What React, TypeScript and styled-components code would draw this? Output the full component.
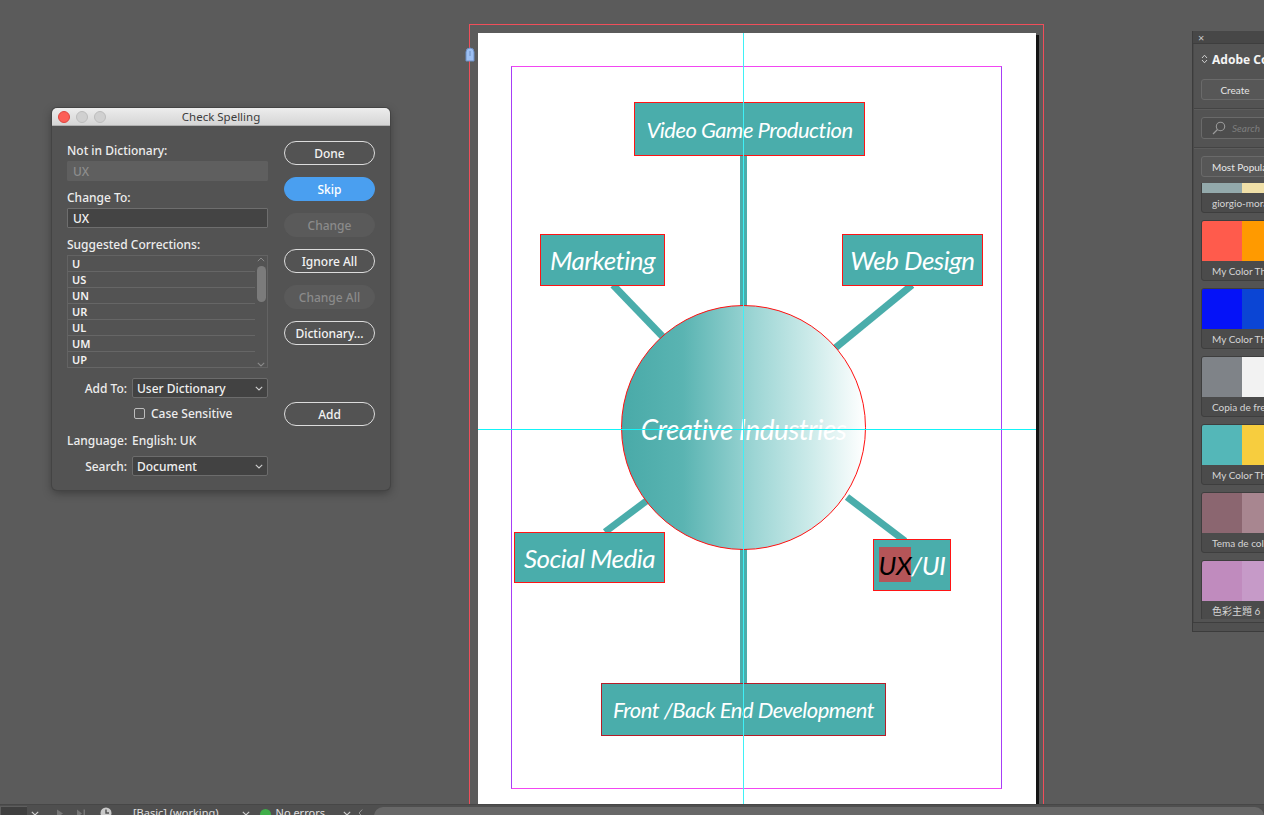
import React from "react";
import styled, { createGlobalStyle } from "styled-components";

const Global = createGlobalStyle`
  html, body { margin: 0; padding: 0; background: #5b5b5b; overflow: hidden; }
  #root { height: 100vh; }
  * { box-sizing: border-box; }
`;

const UI = `"Noto Sans", "Open Sans", sans-serif`;
const DIAGRAM = `Lato, "Open Sans", sans-serif`;

const Workspace = styled.div`
  width: 100vw;
  height: 100vh;
  display: flex;
  flex-direction: column;
  overflow: hidden;
  font-family: ${UI};
`;

const Canvas = styled.div`
  position: relative;
  flex: 0 0 804px;
  overflow: hidden;
  background: #5b5b5b;
`;

/* ---------- document spread ---------- */
const Bleed = styled.div`
  position: absolute;
  left: 469px;
  top: 24px;
  width: 575px;
  height: 800px;
  border: 1px solid #f04e5a;
  border-bottom: none;
  padding: 8px 7px 0 8px;
  display: flex;
`;

const Page = styled.div`
  position: relative;
  width: 558px;
  height: 790px;
  background: #ffffff;
  box-shadow: 3px 2px 0 0 #141414;
`;

const MarginGuide = styled.div`
  position: absolute;
  left: 33px;
  top: 33px;
  width: 491px;
  height: 723px;
  border-top: 1px solid #f246f2;
  border-bottom: 1px solid #f246f2;
  border-left: 1px solid #a63ef6;
  border-right: 1px solid #a63ef6;
`;

const Connectors = styled.svg`
  position: absolute;
  left: 0;
  top: 0;
  width: 558px;
  height: 790px;
`;

const Hub = styled.div`
  position: absolute;
  left: 143px;
  top: 272px;
  width: 245px;
  height: 245px;
  border-radius: 50%;
  border: 1px solid #ff1010;
  background: linear-gradient(90deg, #49aaa8 0%, #5ab4b2 25%, #9ed6d5 55%, #cdebea 78%, #ffffff 100%);
  display: flex;
  align-items: center;
  justify-content: center;
`;

const HubLabel = styled.span`
  font-family: ${DIAGRAM};
  font-style: italic;
  font-size: 28px;
  letter-spacing: -0.6px;
  color: #ffffff;
  white-space: nowrap;
  margin-top: 2px;
`;

const NodeBox = styled.div<{ $dark?: boolean }>`
  position: absolute;
  background: #4aadab;
  border: 1px solid ${(p) => (p.$dark ? "#b51c28" : "#ff1414")};
  display: flex;
  align-items: center;
  justify-content: center;
  font-family: ${DIAGRAM};
  font-style: italic;
  color: #ffffff;
  white-space: nowrap;
`;

const NodeText = styled.span<{ $size: number }>`
  font-size: ${(p) => p.$size}px;
  letter-spacing: -0.5px;
`;

const Highlight = styled.span`
  background: #b55558;
  color: #000000;
  padding: 2px 0 1px 0;
`;

const VGuide = styled.div`
  position: absolute;
  left: 265px;
  top: 0;
  width: 1px;
  height: 790px;
  background: #3ff0f6;
`;

const HGuide = styled.div`
  position: absolute;
  left: 0;
  top: 396px;
  width: 558px;
  height: 1px;
  background: #12f4f8;
`;

const LockIcon = styled.svg`
  position: absolute;
  left: 465px;
  top: 47px;
`;

/* ---------- check spelling dialog ---------- */
const Dialog = styled.div`
  position: absolute;
  left: 52px;
  top: 108px;
  width: 338px;
  border-radius: 5px;
  background: #535353;
  box-shadow: 0 0 0 1px #444, 0 3px 10px rgba(0, 0, 0, 0.35);
  overflow: hidden;
`;

const TitleBar = styled.div`
  position: relative;
  height: 18px;
  background: linear-gradient(#ededed, #d5d5d5);
  border-bottom: 1px solid #b0b0b0;
  display: flex;
  align-items: center;
  justify-content: center;
`;

const Lights = styled.div`
  position: absolute;
  left: 6px;
  top: 3px;
  display: flex;
  gap: 6px;
`;

const Light = styled.span<{ $red?: boolean }>`
  width: 12px;
  height: 12px;
  border-radius: 50%;
  background: ${(p) => (p.$red ? "#fc5f57" : "#d0d0d0")};
  border: 1px solid ${(p) => (p.$red ? "#dd453f" : "#bcbcbc")};
`;

const TitleText = styled.span`
  font-size: 11.5px;
  color: #3c3c3c;
  font-family: ${UI};
`;

const DialogBody = styled.div`
  display: flex;
  gap: 16px;
  padding: 15px 15px 14px 15px;
`;

const LeftCol = styled.div`
  width: 201px;
  display: flex;
  flex-direction: column;
`;

const FieldLabel = styled.div<{ $gap?: number }>`
  height: 16px;
  line-height: 16px;
  margin-top: ${(p) => p.$gap ?? 0}px;
  font-size: 12px;
  font-weight: 500;
  color: #ededed;
  white-space: nowrap;
`;

const TextField = styled.div<{ $readOnly?: boolean }>`
  margin-top: 2px;
  height: 20px;
  line-height: 19px;
  padding: 0 5px;
  font-size: 12px;
  font-weight: 500;
  border-radius: 1px;
  background: ${(p) => (p.$readOnly ? "#5f5f5f" : "#444444")};
  border: 1px solid ${(p) => (p.$readOnly ? "#5f5f5f" : "#6e6e6e")};
  color: ${(p) => (p.$readOnly ? "#8d8d8d" : "#f2f2f2")};
`;

const ListBox = styled.div`
  position: relative;
  margin-top: 2px;
  height: 113px;
  border: 1px solid #636363;
  display: flex;
`;

const ListRows = styled.div`
  flex: 1;
`;

const ListRow = styled.div`
  height: 16px;
  line-height: 15px;
  padding-left: 4px;
  font-size: 11px;
  font-weight: 600;
  color: #f2f2f2;
  border-bottom: 1px solid #666666;
`;

const ScrollTrack = styled.div`
  width: 12px;
  display: flex;
  flex-direction: column;
  align-items: center;
  padding-top: 1px;
`;

const ScrollThumb = styled.div`
  width: 9px;
  height: 36px;
  margin-top: 4px;
  border-radius: 5px;
  background: #7b7b7b;
`;

const ScrollSpacer = styled.div`
  flex: 1;
`;

const FormGrid = styled.div`
  margin-top: 10px;
  display: grid;
  grid-template-columns: 60px 136px;
  column-gap: 5px;
  align-items: center;
`;

const RowLabel = styled.div`
  text-align: right;
  font-size: 12px;
  font-weight: 500;
  color: #ededed;
  white-space: nowrap;
`;

const RowValue = styled.div`
  font-size: 12px;
  font-weight: 500;
  color: #ededed;
  white-space: nowrap;
`;

const Select = styled.div`
  height: 20px;
  padding: 0 4px;
  border: 1px solid #6c6c6c;
  border-radius: 2px;
  background: #424242;
  display: flex;
  align-items: center;
  justify-content: space-between;
  font-size: 12px;
  font-weight: 500;
  color: #f0f0f0;
`;

const GridCell = styled.div<{ $col?: number; $mt?: number }>`
  grid-column: ${(p) => p.$col ?? "auto"};
  margin-top: ${(p) => p.$mt ?? 0}px;
`;

const CheckRow = styled.label`
  display: flex;
  align-items: center;
  gap: 6px;
  height: 16px;
  padding-left: 2px;
  font-size: 12px;
  font-weight: 500;
  color: #ededed;
`;

const CheckBox = styled.span`
  width: 11px;
  height: 11px;
  border: 1px solid #bdbdbd;
  border-radius: 2px;
`;

const RightCol = styled.div`
  width: 91px;
  display: flex;
  flex-direction: column;
  gap: 12px;
`;

const SpellButton = styled.div<{ $variant: "outline" | "primary" | "disabled"; $mt?: number }>`
  height: 24px;
  border-radius: 12px;
  margin-top: ${(p) => p.$mt ?? 0}px;
  display: flex;
  align-items: center;
  justify-content: center;
  font-size: 12px;
  font-weight: 500;
  ${(p) =>
    p.$variant === "primary"
      ? "background:#4a9ff0;border:1px solid #4a9ff0;color:#ffffff;"
      : p.$variant === "disabled"
      ? "background:#5a5a5a;border:1px solid #5a5a5a;color:#8b8b8b;"
      : "background:transparent;border:1px solid #dcdcdc;color:#f2f2f2;"}
`;

/* ---------- adobe color themes panel ---------- */
const ThemePanel = styled.div`
  position: absolute;
  left: 1192px;
  top: 31px;
  width: 240px;
  height: 601px;
  background: #535353;
  border-left: 1px solid #3c3c3c;
  border-bottom: 1px solid #3c3c3c;
  display: flex;
  flex-direction: column;
`;

const PanelTab = styled.div`
  height: 13px;
  background: #474747;
  border-bottom: 1px solid #3e3e3e;
  display: flex;
  align-items: center;
  padding-left: 5px;
  color: #c8c8c8;
  font-size: 11px;
  line-height: 1;
`;

const PanelBody = styled.div`
  flex: 1;
  display: flex;
  flex-direction: column;
  padding-left: 7px;
  border-left: 1px solid #4a4a4a;
`;

const PanelTitle = styled.div`
  height: 30px;
  display: flex;
  align-items: center;
  gap: 4px;
  margin-left: 0;
  font-size: 12px;
  font-weight: 700;
  color: #f4f4f4;
  white-space: nowrap;
`;

const PanelButton = styled.div<{ $width: number; $mt: number; $left?: boolean }>`
  width: ${(p) => p.$width}px;
  height: 21px;
  margin-top: ${(p) => p.$mt}px;
  border: 1px solid #6a6a6a;
  border-radius: 3px;
  background: #575757;
  display: flex;
  align-items: center;
  justify-content: ${(p) => (p.$left ? "flex-start" : "center")};
  padding-left: ${(p) => (p.$left ? 10 : 0)}px;
  font-family: Lato, "Open Sans", sans-serif;
  font-size: 10px;
  color: #e6e6e6;
  white-space: nowrap;
`;

const Divider = styled.div<{ $mt: number }>`
  height: 1px;
  margin-top: ${(p) => p.$mt}px;
  margin-left: -7px;
  background: #444444;
  box-shadow: 0 1px 0 #5c5c5c;
`;

const SearchBox = styled.div`
  width: 200px;
  height: 22px;
  margin-top: 8px;
  border: 1px solid #6a6a6a;
  border-radius: 3px;
  background: #4d4d4d;
  display: flex;
  align-items: center;
  gap: 6px;
  padding-left: 10px;
  font-family: Lato, "Open Sans", sans-serif;
  font-size: 10px;
  font-style: italic;
  color: #7e7e7e;
`;

const ThemeViewport = styled.div`
  margin-top: 6px;
  height: 436px;
  overflow: hidden;
`;

const ThemeList = styled.div`
  display: flex;
  flex-direction: column;
  gap: 7px;
  margin-top: -31px;
`;

const ThemeCard = styled.div`
  width: 200px;
  height: 61px;
  border: 1px solid #3e3e3e;
  border-radius: 3px;
  overflow: hidden;
  display: flex;
  flex-direction: column;
  background: #4b4b4b;
`;

const Swatches = styled.div`
  height: 40px;
  display: flex;
`;

const Swatch = styled.div<{ $c: string }>`
  width: 40px;
  background: ${(p) => p.$c};
`;

const CardLabel = styled.div`
  flex: 1;
  display: flex;
  align-items: center;
  padding-left: 10px;
  font-size: 10px;
  color: #d6d6d6;
  white-space: nowrap;
  font-family: Lato, "Noto Sans CJK TC", sans-serif;
`;

const PanelFooter = styled.div`
  height: 9px;
  border-top: 1px solid #3e3e3e;
  background: #505050;
`;

/* ---------- status bar ---------- */
const StatusBar = styled.div`
  flex: 0 0 22px;
  background: #4f4f4f;
  border-top: 1px solid #474747;
  display: flex;
  align-items: flex-start;
  font-size: 11px;
  color: #e0e0e0;
  white-space: nowrap;
`;

const PageField = styled.div`
  width: 27px;
  height: 18px;
  margin-top: 1px;
  background: #3f3f3f;
  border: 1px solid #5e5e5e;
  border-right: none;
`;

const ChevBox = styled.div<{ $ml?: number }>`
  width: 15px;
  height: 16px;
  margin-left: ${(p) => p.$ml ?? 0}px;
  display: flex;
  align-items: center;
  justify-content: center;
`;

const BarField = styled.div<{ $ml: number }>`
  margin-left: ${(p) => p.$ml}px;
  height: 16px;
  line-height: 16px;
  display: flex;
  align-items: center;
`;

const StatusDot = styled.span`
  width: 11px;
  height: 11px;
  border-radius: 50%;
  background: #3fae49;
  margin-top: 3px;
`;

const ScrollField = styled.div`
  margin-left: 11px;
  margin-top: 2px;
  flex: 1;
  height: 18px;
  border-radius: 9px;
  background: #686868;
`;

const Chevron = ({ color = "#cfcfcf" }: { color?: string }) => (
  <svg width="8" height="5" viewBox="0 0 8 5">
    <path d="M0.8 0.8 L4 4 L7.2 0.8" fill="none" stroke={color} strokeWidth="1.1" />
  </svg>
);

const connectors: [number, number, number, number][] = [
  [265.5, 122, 265.5, 273],
  [265.5, 516, 265.5, 651],
  [135, 252, 186, 305],
  [434, 252, 356, 316],
  [127, 499, 171, 466],
  [369, 464, 427, 508],
];

const suggestions = ["U", "US", "UN", "UR", "UL", "UM", "UP"];

const themes: { a: string; b: string; name: string }[] = [
  { a: "#93a9ab", b: "#f0e0a8", name: "giorgio-morandi" },
  { a: "#ff5b4c", b: "#ff9a00", name: "My Color Theme" },
  { a: "#0512f8", b: "#0b45d4", name: "My Color Theme" },
  { a: "#7f8388", b: "#f2f2f2", name: "Copia de frenchtoast" },
  { a: "#54b7b8", b: "#f7cd3e", name: "My Color Theme" },
  { a: "#8b6670", b: "#a88690", name: "Tema de color 1" },
  { a: "#c08bbe", b: "#c69ac8", name: "色彩主題 6" },
];

export default function App() {
  return (
    <>
      <Global />
      <Workspace>
        <Canvas>
          <Bleed>
            <Page>
              <MarginGuide />
              <Connectors viewBox="0 0 558 790">
                {connectors.map(([x1, y1, x2, y2], i) => (
                  <line key={i} x1={x1} y1={y1} x2={x2} y2={y2} stroke="#4aadab" strokeWidth="7" />
                ))}
              </Connectors>
              <Hub>
                <HubLabel>Creative Industries</HubLabel>
              </Hub>
              <NodeBox style={{ left: 156, top: 69, width: 231, height: 54 }}>
                <NodeText $size={22}>Video Game Production</NodeText>
              </NodeBox>
              <NodeBox style={{ left: 62, top: 201, width: 125, height: 52 }}>
                <NodeText $size={26}>Marketing</NodeText>
              </NodeBox>
              <NodeBox style={{ left: 364, top: 201, width: 141, height: 52 }}>
                <NodeText $size={26}>Web Design</NodeText>
              </NodeBox>
              <NodeBox style={{ left: 36, top: 499, width: 151, height: 51 }}>
                <NodeText $size={26}>Social Media</NodeText>
              </NodeBox>
              <NodeBox style={{ left: 395, top: 506, width: 78, height: 52 }}>
                <NodeText $size={26}>
                  <Highlight>UX</Highlight>/UI
                </NodeText>
              </NodeBox>
              <NodeBox $dark style={{ left: 123, top: 650, width: 285, height: 53 }}>
                <NodeText $size={22}>Front /Back End Development</NodeText>
              </NodeBox>
              <VGuide />
              <HGuide />
            </Page>
          </Bleed>
          <LockIcon width="10" height="15" viewBox="0 0 10 15">
            <path d="M1 14 V5 A4 4 0 0 1 9 5 V14 Z" fill="#9dc0f3" stroke="#6d8fc4" strokeWidth="1" />
            <line x1="5" y1="4" x2="5" y2="9" stroke="#6d8fc4" strokeWidth="1" />
          </LockIcon>

          <Dialog>
            <TitleBar>
              <Lights>
                <Light $red />
                <Light />
                <Light />
              </Lights>
              <TitleText>Check Spelling</TitleText>
            </TitleBar>
            <DialogBody>
              <LeftCol>
                <FieldLabel $gap={2}>Not in Dictionary:</FieldLabel>
                <TextField $readOnly>UX</TextField>
                <FieldLabel $gap={9}>Change To:</FieldLabel>
                <TextField>UX</TextField>
                <FieldLabel $gap={9}>Suggested Corrections:</FieldLabel>
                <ListBox>
                  <ListRows>
                    {suggestions.map((s) => (
                      <ListRow key={s}>{s}</ListRow>
                    ))}
                  </ListRows>
                  <ScrollTrack>
                    <svg width="8" height="5" viewBox="0 0 8 5">
                      <path d="M0.8 4.2 L4 1 L7.2 4.2" fill="none" stroke="#8a8a8a" strokeWidth="1" />
                    </svg>
                    <ScrollThumb />
                    <ScrollSpacer />
                    <Chevron color="#8a8a8a" />
                  </ScrollTrack>
                </ListBox>
                <FormGrid>
                  <RowLabel>Add To:</RowLabel>
                  <Select>
                    <span>User Dictionary</span>
                    <Chevron />
                  </Select>
                  <GridCell $col={2} $mt={7}>
                    <CheckRow>
                      <CheckBox />
                      Case Sensitive
                    </CheckRow>
                  </GridCell>
                  <GridCell $mt={11}>
                    <RowLabel>Language:</RowLabel>
                  </GridCell>
                  <GridCell $mt={11}>
                    <RowValue>English: UK</RowValue>
                  </GridCell>
                  <GridCell $mt={7}>
                    <RowLabel>Search:</RowLabel>
                  </GridCell>
                  <GridCell $mt={7}>
                    <Select>
                      <span>Document</span>
                      <Chevron />
                    </Select>
                  </GridCell>
                </FormGrid>
              </LeftCol>
              <RightCol>
                <SpellButton $variant="outline">Done</SpellButton>
                <SpellButton $variant="primary">Skip</SpellButton>
                <SpellButton $variant="disabled">Change</SpellButton>
                <SpellButton $variant="outline">Ignore All</SpellButton>
                <SpellButton $variant="disabled">Change All</SpellButton>
                <SpellButton $variant="outline">Dictionary...</SpellButton>
                <SpellButton $variant="outline" $mt={45}>
                  Add
                </SpellButton>
              </RightCol>
            </DialogBody>
          </Dialog>

          <ThemePanel>
            <PanelTab>×</PanelTab>
            <PanelBody>
              <PanelTitle>
                <svg width="7" height="10" viewBox="0 0 7 10">
                  <path d="M1 4 L3.5 1.2 L6 4 M1 6 L3.5 8.8 L6 6" fill="none" stroke="#d0d0d0" strokeWidth="1" />
                </svg>
                Adobe Color Themes
              </PanelTitle>
              <PanelButton $width={68} $mt={5}>
                Create
              </PanelButton>
              <Divider $mt={8} />
              <SearchBox>
                <svg width="14" height="14" viewBox="0 0 14 14">
                  <circle cx="8.5" cy="5.5" r="4.2" fill="none" stroke="#9a9a9a" strokeWidth="1.1" />
                  <line x1="5.5" y1="8.5" x2="1" y2="13" stroke="#9a9a9a" strokeWidth="1.3" />
                </svg>
                Search
              </SearchBox>
              <Divider $mt={8} />
              <PanelButton $width={120} $mt={8} $left>
                Most Popular
              </PanelButton>
              <ThemeViewport>
                <ThemeList>
                  {themes.map((t, i) => (
                    <ThemeCard key={i}>
                      <Swatches>
                        <Swatch $c={t.a} />
                        <Swatch $c={t.b} />
                      </Swatches>
                      <CardLabel>{t.name}</CardLabel>
                    </ThemeCard>
                  ))}
                </ThemeList>
              </ThemeViewport>
            </PanelBody>
            <PanelFooter />
          </ThemePanel>
        </Canvas>

        <StatusBar>
          <PageField />
          <ChevBox>
            <Chevron />
          </ChevBox>
          <BarField $ml={14}>
            <svg width="8" height="9" viewBox="0 0 8 9">
              <path d="M1 0.5 L7 4.5 L1 8.5 Z" fill="#777" />
            </svg>
          </BarField>
          <BarField $ml={12}>
            <svg width="10" height="9" viewBox="0 0 10 9">
              <path d="M1 0.5 L6 4.5 L1 8.5 Z" fill="#777" />
              <rect x="7.5" y="0.5" width="1.5" height="8" fill="#777" />
            </svg>
          </BarField>
          <BarField $ml={14}>
            <svg width="12" height="12" viewBox="0 0 12 12">
              <circle cx="6" cy="6" r="5.5" fill="#c9c9c9" />
              <path d="M6 2.5 V6 H9" fill="none" stroke="#4f4f4f" strokeWidth="1.4" />
            </svg>
          </BarField>
          <BarField $ml={21}>[Basic] (working)</BarField>
          <ChevBox $ml={20}>
            <Chevron />
          </ChevBox>
          <BarField $ml={6}>
            <StatusDot />
          </BarField>
          <BarField $ml={5}>No errors</BarField>
          <ChevBox $ml={15}>
            <Chevron />
          </ChevBox>
          <BarField $ml={3}>
            <svg width="5" height="8" viewBox="0 0 5 8">
              <path d="M4.2 0.6 L1 4 L4.2 7.4" fill="none" stroke="#999" strokeWidth="1" />
            </svg>
          </BarField>
          <ScrollField />
        </StatusBar>
      </Workspace>
    </>
  );
}
